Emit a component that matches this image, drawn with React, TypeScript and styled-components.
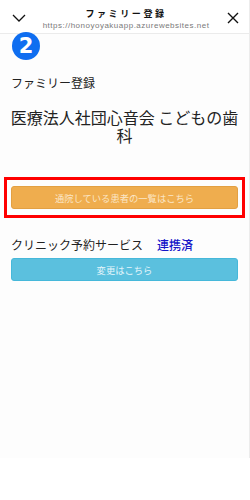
import React from "react";
import styled, { createGlobalStyle } from "styled-components";

const JP = `"Noto Sans CJK JP", "Noto Sans", sans-serif`;

const GlobalStyle = createGlobalStyle`
  html, body {
    margin: 0;
    padding: 0;
    background: #ffffff;
  }
  * {
    box-sizing: border-box;
  }
`;

const App = () => {
  return (
    <>
      <GlobalStyle />
      <Page>
        <Header>
          <IconButton aria-label="close menu">
            <svg width="14" height="8" viewBox="0 0 14 8" fill="none">
              <path d="M1 1l6 6 6-6" stroke="#111" strokeWidth="1.3" />
            </svg>
          </IconButton>
          <HeaderTitle>
            <TitleText>ファミリー登録</TitleText>
            <UrlText>https://honoyoyakuapp.azurewebsites.net</UrlText>
          </HeaderTitle>
          <IconButton aria-label="close">
            <svg width="12" height="12" viewBox="0 0 12 12" fill="none">
              <path d="M1 1l10 10M11 1L1 11" stroke="#111" strokeWidth="1.4" />
            </svg>
          </IconButton>
        </Header>

        <Content>
          <StepBadge>2</StepBadge>
          <SectionLabel>ファミリー登録</SectionLabel>
          <ClinicName>医療法人社団心音会 こどもの歯科</ClinicName>

          <Highlight>
            <ActionButton variant="warning">通院している患者の一覧はこちら</ActionButton>
          </Highlight>

          <ServiceRow>
            <span>クリニック予約サービス</span>
            <LinkedTag>連携済</LinkedTag>
          </ServiceRow>
          <ActionButton variant="info">変更はこちら</ActionButton>
        </Content>
      </Page>
    </>
  );
};

const Page = styled.div`
  width: 250px;
  height: 458px;
  background: #fdfdfd;
  border-right: 1px solid #ececec;
  font-family: ${JP};
  color: #222;
`;

const Header = styled.header`
  height: 34px;
  display: flex;
  align-items: center;
  justify-content: space-between;
  padding: 2px 9px 0 12px;
  border-bottom: 1px solid #ebebeb;
  background: #ffffff;
`;

const IconButton = styled.button`
  border: 0;
  background: none;
  padding: 0;
  width: 14px;
  height: 14px;
  display: flex;
  align-items: center;
  justify-content: center;
`;

const HeaderTitle = styled.div`
  display: flex;
  flex-direction: column;
  align-items: center;
  padding-top: 4px;
`;

const TitleText = styled.div`
  font-size: 9px;
  font-weight: 700;
  letter-spacing: 2.6px;
  line-height: 12px;
  color: #111;
`;

const UrlText = styled.div`
  font-family: "Liberation Sans", Arial, sans-serif;
  font-size: 8px;
  line-height: 11px;
  color: #7a7a7a;
  letter-spacing: 0.5px;
`;

const Content = styled.div`
  padding: 0 11px;
`;

const StepBadge = styled.div`
  width: 28px;
  height: 28px;
  margin: -2px 0 0 1px;
  border-radius: 50%;
  background: #0f6ef0;
  color: #ffffff;
  display: flex;
  align-items: center;
  justify-content: center;
  font-family: "DejaVu Sans", sans-serif;
  font-weight: 700;
  font-size: 21px;
  line-height: 1;
  position: relative;
`;

const SectionLabel = styled.div`
  margin-top: 16px;
  font-size: 12px;
  line-height: 14px;
  color: #222;
`;

const ClinicName = styled.h1`
  margin: 18px -5px 0;
  font-size: 16px;
  font-weight: 400;
  line-height: 18px;
  text-align: center;
  color: #222;
`;

const Highlight = styled.div`
  margin: 33px -7px 0;
  border: 3px solid #ff0000;
  padding: 6px 4px;
`;

const ActionButton = styled.div<{ variant: "warning" | "info" }>`
  height: 23px;
  display: flex;
  align-items: center;
  justify-content: center;
  border-radius: 3px;
  font-size: 9.3px;
  background: ${(p) => (p.variant === "warning" ? "#efad4e" : "#5bc0de")};
  border: 1px solid ${(p) => (p.variant === "warning" ? "#e3a042" : "#46b8da")};
  color: ${(p) => (p.variant === "warning" ? "#fbe6c6" : "#e4f5fb")};
`;

const ServiceRow = styled.div`
  margin: 19px 0 5px;
  display: flex;
  align-items: center;
  gap: 14px;
  font-size: 12px;
  line-height: 16px;
  color: #222;
`;

const LinkedTag = styled.span`
  color: #1515c8;
  font-weight: 500;
`;

export default App;
